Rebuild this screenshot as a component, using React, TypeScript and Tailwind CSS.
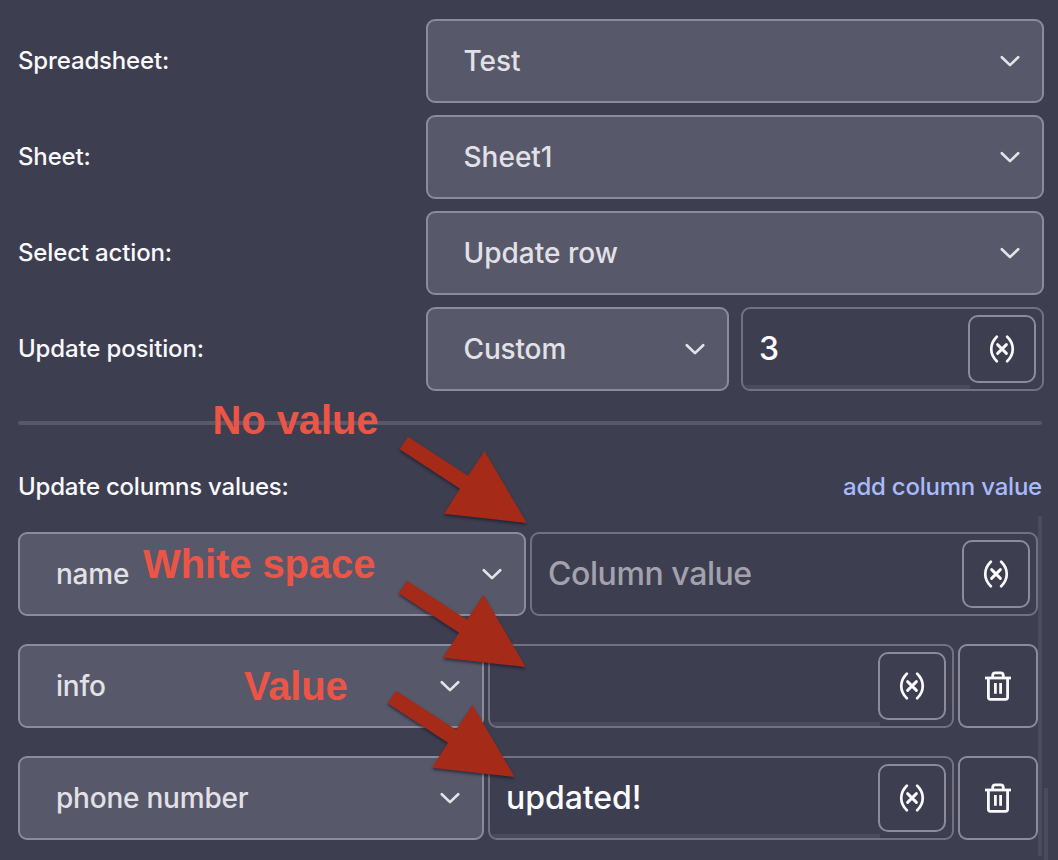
import React from "react";

function Chevron() {
  return (
    <svg width="20" height="12" viewBox="0 0 20 12" fill="none" className="shrink-0">
      <path d="M1.8 2.2 L10 10.1 L18.2 2.2" stroke="#e4e3e8" strokeWidth="2.6" strokeLinecap="round" strokeLinejoin="round" />
    </svg>
  );
}

function Select({ value, className = "" }: { value: string; className?: string }) {
  return (
    <button type="button" className={`flex h-[84px] shrink-0 items-center justify-between rounded-[9px] border-2 border-[#8d8b99] bg-[#58586b] pr-[22px] ${className}`}>
      <span className="text-[28px] whitespace-pre text-[#e2e1e6]">{value}</span>
      <Chevron />
    </button>
  );
}

function VariableButton() {
  return (
    <button type="button" className="flex h-[68px] w-[68px] shrink-0 items-center justify-center rounded-[10px] border-2 border-[#8d8b99] bg-[#3e3e51]">
      <svg width="28" height="28" viewBox="0 0 28 28" fill="none" stroke="#fafafc" strokeWidth="2.7" strokeLinecap="round">
        <path d="M8.8 1.8 C1.4 9 1.4 19 8.8 26.2" />
        <path d="M19.2 1.8 C26.6 9 26.6 19 19.2 26.2" />
        <path d="M9.6 9.6 L18.4 18.4 M18.4 9.6 L9.6 18.4" strokeWidth="2.9" />
      </svg>
    </button>
  );
}

function Field({ value = "", placeholder = "", className = "", scroll = true }: { value?: string; placeholder?: string; className?: string; scroll?: boolean }) {
  return (
    <div className={`flex h-[84px] shrink-0 items-stretch overflow-hidden rounded-[9px] border-2 border-[#737180] bg-[#3e3e51] pr-[6px] ${className}`}>
      <div className="flex min-w-0 flex-1 flex-col justify-end">
        <div className="flex flex-1 items-center pt-1 pl-4 text-[32px] leading-10 whitespace-pre">
          {value ? <span className="tracking-[-0.05px] text-[#fbfbfd]">{value}</span> : <span className="tracking-[-0.42px] text-[#a3a2ac]">{placeholder}</span>}
        </div>
        <div className={scroll ? "-mr-[2px] h-1 bg-[#4c4b5e]" : "h-1"} />
      </div>
      <div className="flex items-center">
        <VariableButton />
      </div>
    </div>
  );
}

function TrashButton() {
  return (
    <button type="button" className="flex h-[84px] w-20 shrink-0 items-center justify-center rounded-[9px] border-2 border-[#8d8b99]">
      <svg width="28" height="32" viewBox="0 0 28 32" fill="none" stroke="#fafafc" strokeWidth="2.8" strokeLinejoin="round">
        <path d="M1 8 H27" />
        <path d="M8.7 8 V5.4 Q8.7 2.8 11.3 2.8 H16.7 Q19.3 2.8 19.3 5.4 V8" />
        <path d="M4.4 8 V27.3 Q4.4 29.3 6.4 29.3 H21.6 Q23.6 29.3 23.6 27.3 V8" />
        <path d="M11.4 13 V23.8 M16.6 13 V23.8" />
      </svg>
    </button>
  );
}

function Arrow({ className }: { className: string }) {
  return (
    <svg width="140" height="100" viewBox="0 0 140 100" className={`absolute ${className}`}>
      <path d="M18 6.7 L78 45.7 L94.5 21 L136.7 93 L54 83.7 L70 58.7 L9.7 19.2 Z" fill="#a52b18" className="drop-shadow-[0_2px_1.5px_rgba(20,18,35,0.6)]" />
    </svg>
  );
}

function Note({ children, className }: { children: string; className: string }) {
  return <span className={`absolute whitespace-pre font-['Liberation_Sans',sans-serif] text-[40px] leading-[46px] font-bold text-[#ec5545] ${className}`}>{children}</span>;
}

export default function App() {
  const label = "w-[408px] shrink-0 whitespace-pre text-[24px] tracking-[-0.15px]";
  return (
    <main className="relative flex h-[860px] w-[1058px] flex-col overflow-hidden bg-[#3e3e51] pt-[19px] pl-[18px] font-['Inter',sans-serif] font-[450] text-[#f9f9fb]">
      <section className="flex flex-col gap-3">
        <div className="flex items-center">
          <span className={label}>Spreadsheet:</span>
          <Select value="Test" className="w-[618px] pl-[35.5px]" />
        </div>
        <div className="flex items-center">
          <span className={label}>Sheet:</span>
          <Select value="Sheet1" className="w-[618px] pl-[35.5px]" />
        </div>
        <div className="flex items-center">
          <span className={label}>Select action:</span>
          <Select value="Update row" className="w-[618px] pl-[35.5px]" />
        </div>
        <div className="flex items-center">
          <span className={label}>Update position:</span>
          <Select value="Custom" className="mr-3 w-[303px] pl-[35.5px] tracking-[-0.15px]" />
          <Field value="3" className="w-[303px]" />
        </div>
      </section>
      <div className="mt-[30px] h-1 w-[1024px] shrink-0 rounded-sm bg-[#58586b]" />
      <div className="mt-[42px] flex h-10 w-[1024px] shrink-0 items-center justify-between text-[24px] tracking-[-0.22px]">
        <span className="whitespace-pre">Update columns values:</span>
        <a className="whitespace-pre text-[#a9bafa]">add column value</a>
      </div>
      <div className="mt-[9px] flex h-[340px] w-[1024px] shrink-0 items-stretch">
        <div className="flex w-[1020px] flex-col gap-7 pt-4">
          <div className="flex gap-1">
            <Select value="name" className="w-[508px] pl-9 tracking-[-0.22px]" />
            <Field placeholder="Column value" className="w-[508px]" scroll={false} />
          </div>
          <div className="flex gap-1">
            <Select value="info" className="w-[466px] pl-9 tracking-[-0.22px]" />
            <Field className="w-[466px]" />
            <TrashButton />
          </div>
          <div className="flex gap-1">
            <Select value="phone number" className="w-[466px] pl-9 tracking-[-0.22px]" />
            <Field value="updated!" className="w-[466px]" />
            <TrashButton />
          </div>
        </div>
        <div className="w-1 bg-[#4c4b5e]" />
      </div>
      <div className="absolute top-[788px] left-[1044px] h-[72px] w-1 bg-[#4c4b5e]" />
      <Arrow className="top-[430px] left-[390px]" />
      <Arrow className="top-[574px] left-[389px]" />
      <Arrow className="top-[684px] left-[378px]" />
      <Note className="top-[397px] left-[212.5px] tracking-[-0.1px]">No value</Note>
      <Note className="top-[541px] left-[143px] tracking-[-0.1px]">White space</Note>
      <Note className="top-[663px] left-[244px] tracking-[-0.2px]">Value</Note>
    </main>
  );
}
